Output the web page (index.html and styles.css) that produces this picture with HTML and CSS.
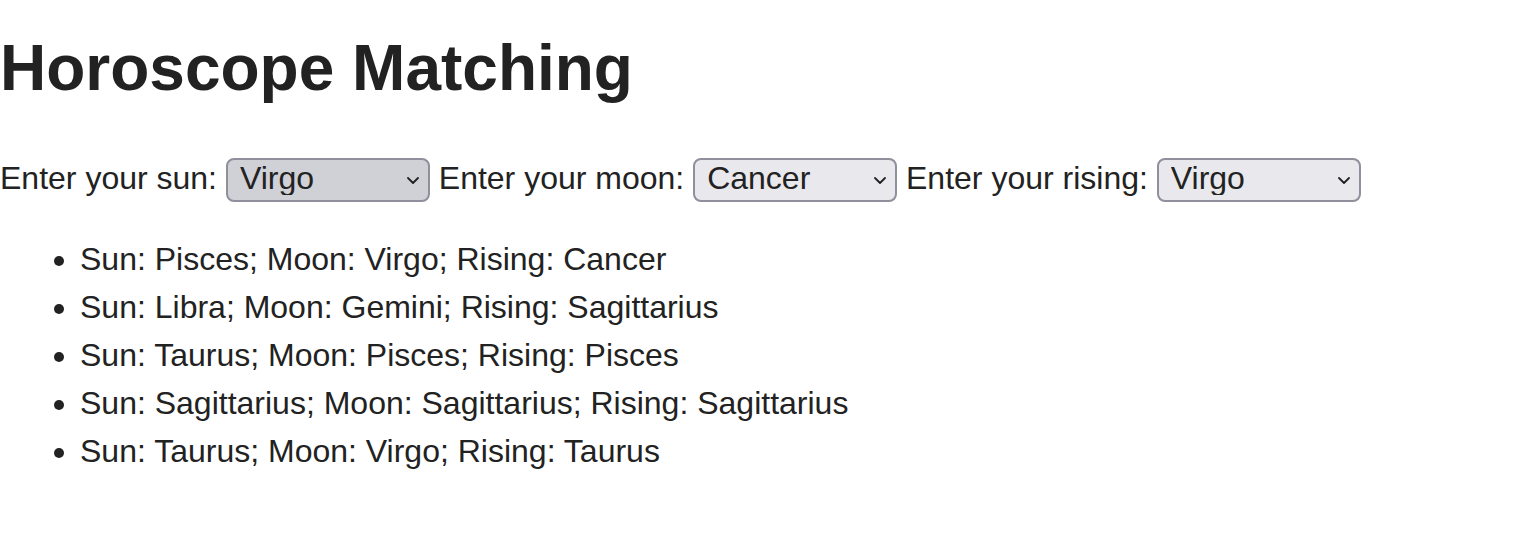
FILE: index.html
```html
<!DOCTYPE html>
<html lang="en">
<head>
<meta charset="utf-8">
<title>Horoscope Matching</title>
<link rel="stylesheet" href="styles.css">
</head>
<body>
<h1 class="title">Horoscope Matching</h1>
<div class="pickers">
  <label class="picker">Enter your sun:</label>
  <span class="select-wrap"><select class="sign sign--active">
    <option>Aries</option><option>Taurus</option><option>Gemini</option><option>Cancer</option><option>Leo</option><option selected>Virgo</option><option>Libra</option><option>Scorpio</option><option>Sagittarius</option><option>Capricorn</option><option>Aquarius</option><option>Pisces</option>
  </select><svg class="chev" viewBox="0 0 12 7" width="12" height="7"><path d="M1 1l5 5 5-5" fill="none" stroke="#222" stroke-width="1.8" stroke-linecap="round" stroke-linejoin="round"/></svg></span>
  <label class="picker">Enter your moon:</label>
  <span class="select-wrap"><select class="sign">
    <option>Aries</option><option>Taurus</option><option>Gemini</option><option selected>Cancer</option><option>Leo</option><option>Virgo</option><option>Libra</option><option>Scorpio</option><option>Sagittarius</option><option>Capricorn</option><option>Aquarius</option><option>Pisces</option>
  </select><svg class="chev" viewBox="0 0 12 7" width="12" height="7"><path d="M1 1l5 5 5-5" fill="none" stroke="#222" stroke-width="1.8" stroke-linecap="round" stroke-linejoin="round"/></svg></span>
  <label class="picker">Enter your rising:</label>
  <span class="select-wrap"><select class="sign">
    <option>Aries</option><option>Taurus</option><option>Gemini</option><option>Cancer</option><option>Leo</option><option selected>Virgo</option><option>Libra</option><option>Scorpio</option><option>Sagittarius</option><option>Capricorn</option><option>Aquarius</option><option>Pisces</option>
  </select><svg class="chev" viewBox="0 0 12 7" width="12" height="7"><path d="M1 1l5 5 5-5" fill="none" stroke="#222" stroke-width="1.8" stroke-linecap="round" stroke-linejoin="round"/></svg></span>
</div>
<ul class="matches">
  <li>Sun: Pisces; Moon: Virgo; Rising: Cancer</li>
  <li>Sun: Libra; Moon: Gemini; Rising: Sagittarius</li>
  <li>Sun: Taurus; Moon: Pisces; Rising: Pisces</li>
  <li>Sun: Sagittarius; Moon: Sagittarius; Rising: Sagittarius</li>
  <li>Sun: Taurus; Moon: Virgo; Rising: Taurus</li>
</ul>
</body>
</html>
```
FILE: styles.css
```css
html, body {
  margin: 0;
  padding: 0;
  background: #fff;
}
body {
  font-family: "Liberation Sans", Arial, Helvetica, sans-serif;
  font-size: 32px;
  color: #222;
}
.title {
  font-size: 64px;
  font-weight: bold;
  margin: 31px 0 53px;
  color: #222;
}
.pickers {
  white-space: nowrap;
}
.picker {
  vertical-align: baseline;
}
.select-wrap {
  position: relative;
  display: inline-block;
  vertical-align: baseline;
}
.sign {
  appearance: none;
  -webkit-appearance: none;
  width: 204px;
  height: 44px;
  box-sizing: border-box;
  border: 2px solid #8f8f9d;
  border-radius: 8px;
  background: #e9e9ed;
  color: #222;
  font-family: inherit;
  font-size: 32px;
  padding: 0 40px 5px 12px;
  margin: 0;
}
.sign--active {
  background: #d0d0d7;
}
.chev {
  position: absolute;
  right: 11px;
  top: 19px;
  pointer-events: none;
}
.matches {
  margin: 33px 0 0;
  padding-left: 80px;
}
.matches li {
  line-height: 48px;
}
```
